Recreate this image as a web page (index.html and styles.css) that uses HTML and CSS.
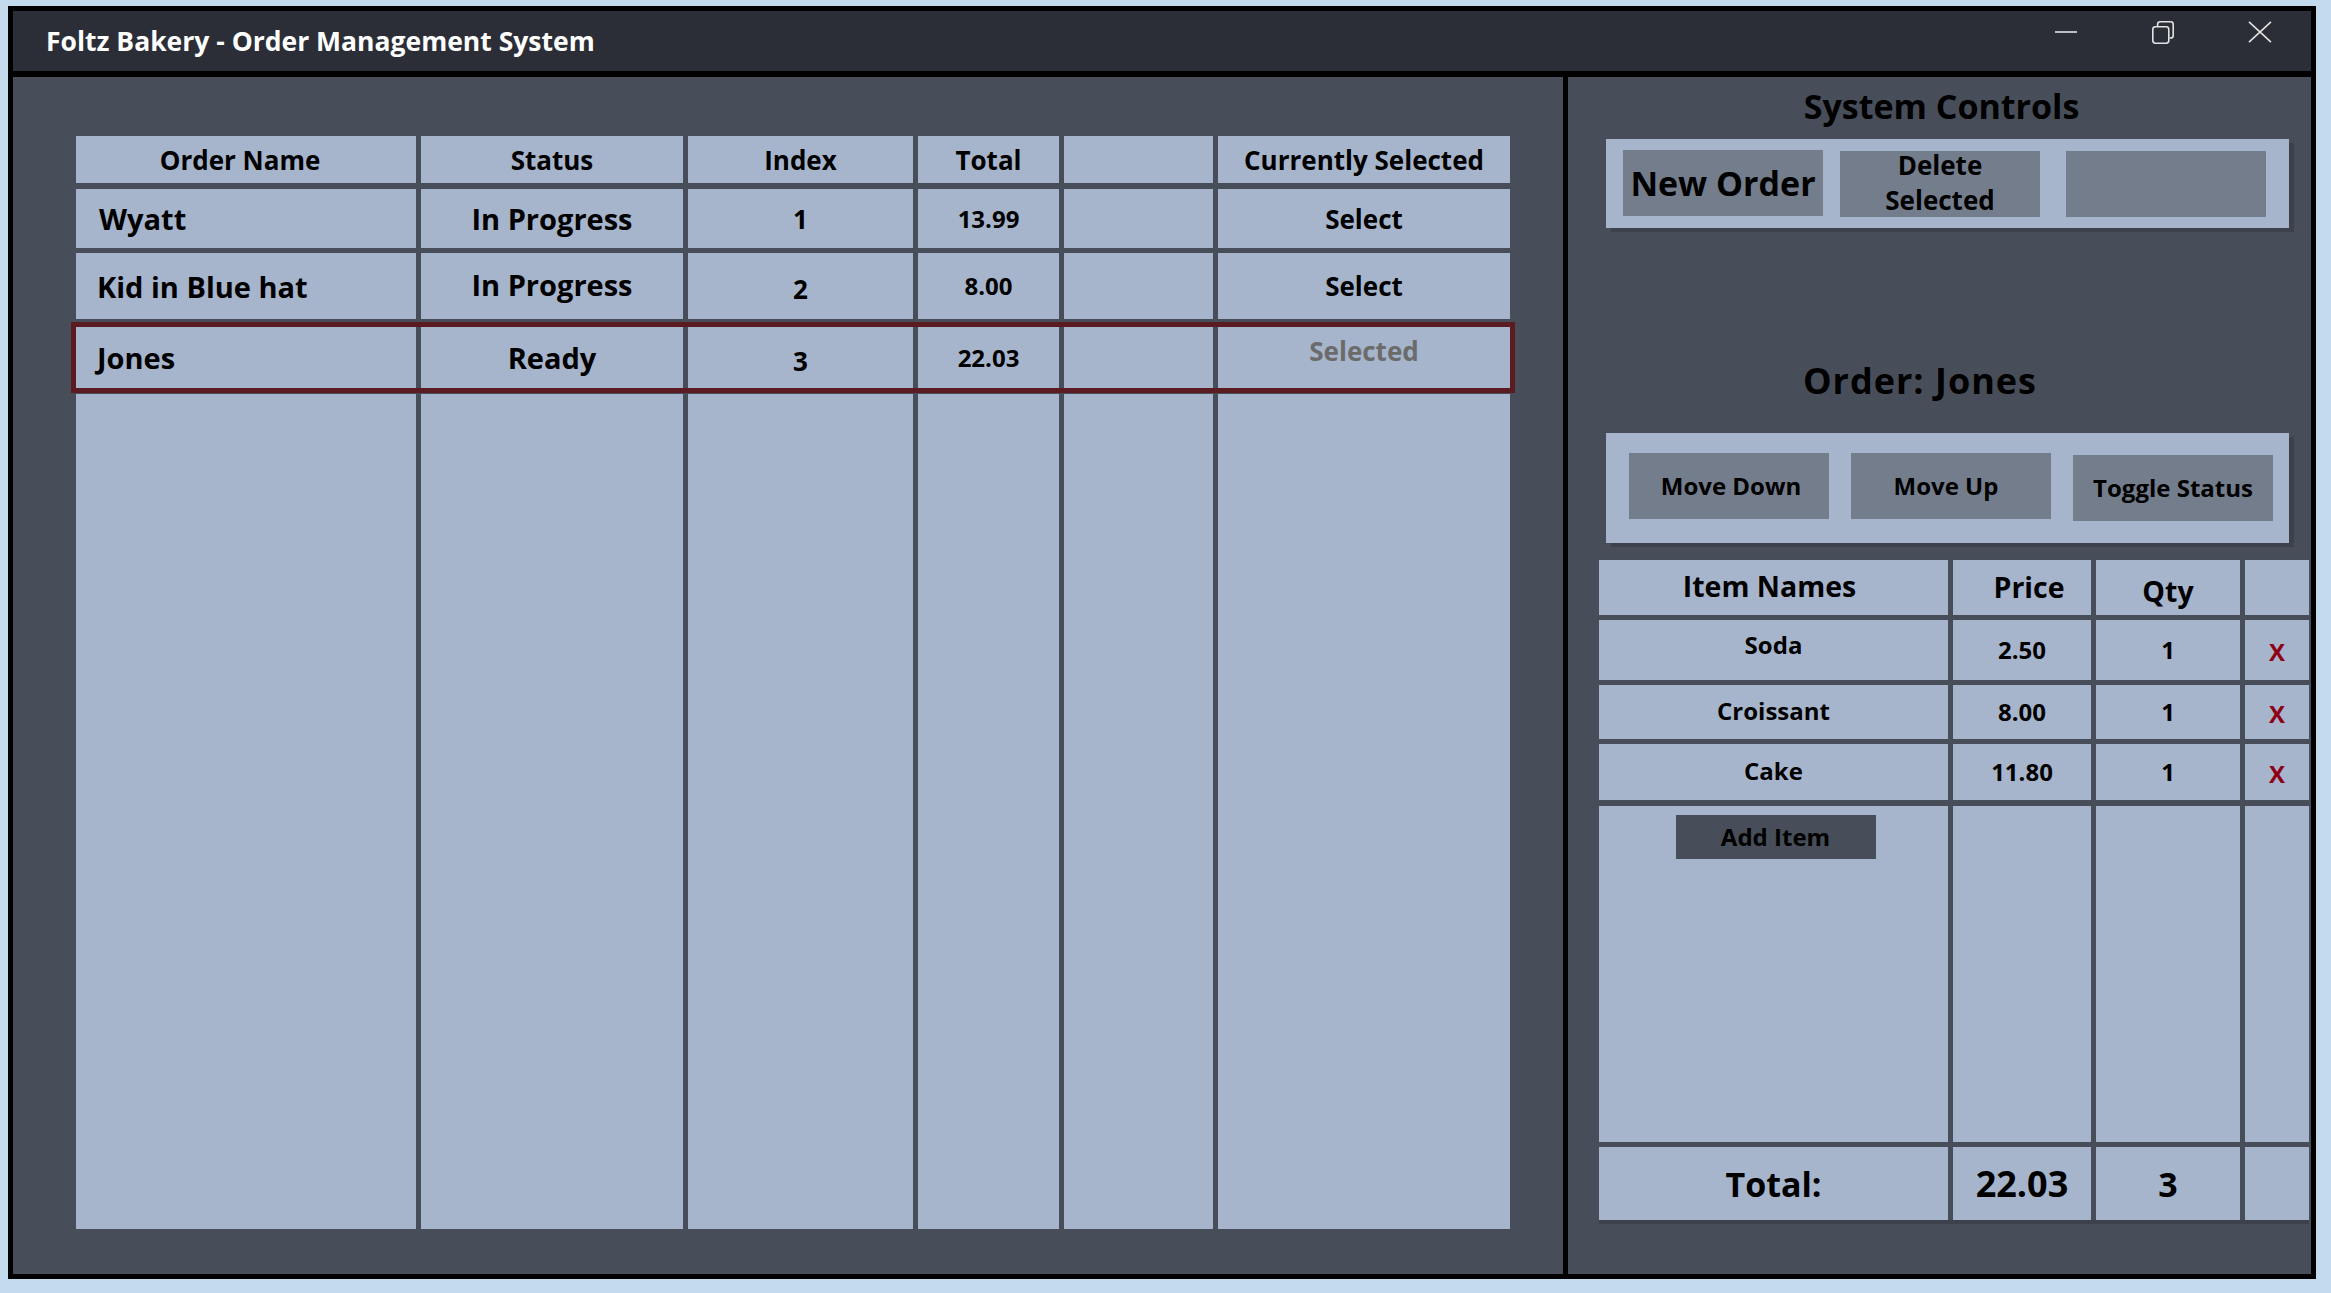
FILE: index.html
```html
<!DOCTYPE html>
<html lang="en">
<head>
<meta charset="utf-8">
<title>Foltz Bakery - Order Management System</title>
<link rel="stylesheet" href="styles.css">
</head>
<body>
<div class="window">
  <header class="titlebar">
    <div class="title">Foltz Bakery - Order Management System</div>
    <div class="caption-buttons">
      <div class="cap-btn">
        <svg width="22" height="22" viewBox="0 0 22 22"><line x1="0" y1="11" x2="22" y2="11" class="cap-stroke"/></svg>
      </div>
      <div class="cap-btn">
        <svg width="22" height="23" viewBox="0 0 22 23" fill="none">
          <rect x="0.8" y="5.8" width="16" height="16.4" rx="2.6" class="cap-stroke"/>
          <path d="M5.6 5.2 V3.4 Q5.6 0.8 8.2 0.8 H18.6 Q21.2 0.8 21.2 3.4 V14.4 Q21.2 17 18.6 17 H17.4" class="cap-stroke"/>
        </svg>
      </div>
      <div class="cap-btn">
        <svg width="26" height="22" viewBox="0 0 26 22"><path d="M2 0.8 L24 21.2 M24 0.8 L2 21.2" class="cap-stroke"/></svg>
      </div>
    </div>
  </header>

  <main class="content">
    <section class="orders-panel">
      <div class="orders-table">
        <div class="orow ohead">
          <div class="cell head-name">Order Name</div>
          <div class="cell">Status</div>
          <div class="cell">Index</div>
          <div class="cell">Total</div>
          <div class="cell"></div>
          <div class="cell">Currently Selected</div>
        </div>
        <div class="orow r1">
          <div class="cell name first">Wyatt</div>
          <div class="cell big">In Progress</div>
          <div class="cell">1</div>
          <div class="cell small">13.99</div>
          <div class="cell"></div>
          <div class="cell">Select</div>
        </div>
        <div class="orow r2">
          <div class="cell name">Kid in Blue hat</div>
          <div class="cell big up">In Progress</div>
          <div class="cell down">2</div>
          <div class="cell small">8.00</div>
          <div class="cell"></div>
          <div class="cell">Select</div>
        </div>
        <div class="orow r3">
          <div class="cell name">Jones</div>
          <div class="cell big">Ready</div>
          <div class="cell down">3</div>
          <div class="cell small">22.03</div>
          <div class="cell"></div>
          <div class="cell selected">Selected</div>
        </div>
        <div class="orow ofill">
          <div class="cell"></div>
          <div class="cell"></div>
          <div class="cell"></div>
          <div class="cell"></div>
          <div class="cell"></div>
          <div class="cell"></div>
        </div>
      </div>
    </section>

    <aside class="side-panel">
      <h2 class="side-title">System Controls</h2>
      <div class="ctrl-box sys-box">
        <div class="btn btn-new">New Order</div>
        <div class="btn btn-delete">Delete<br>Selected</div>
        <div class="btn btn-blank"></div>
      </div>

      <h2 class="order-title">Order: Jones</h2>
      <div class="ctrl-box order-box">
        <div class="btn btn-sm">Move Down</div>
        <div class="btn btn-sm btn-up">Move Up</div>
        <div class="btn btn-sm btn-toggle">Toggle Status</div>
      </div>

      <div class="items-table">
        <div class="irow ihead">
          <div class="cell iname">Item Names</div>
          <div class="cell price-h">Price</div>
          <div class="cell qty-h">Qty</div>
          <div class="cell"></div>
        </div>
        <div class="irow ir1">
          <div class="cell iname lift">Soda</div>
          <div class="cell">2.50</div>
          <div class="cell">1</div>
          <div class="cell remove">X</div>
        </div>
        <div class="irow ir2">
          <div class="cell iname">Croissant</div>
          <div class="cell">8.00</div>
          <div class="cell">1</div>
          <div class="cell remove">X</div>
        </div>
        <div class="irow ir3">
          <div class="cell iname">Cake</div>
          <div class="cell">11.80</div>
          <div class="cell">1</div>
          <div class="cell remove">X</div>
        </div>
        <div class="irow ifill">
          <div class="cell add-cell"><div class="add-btn">Add Item</div></div>
          <div class="cell"></div>
          <div class="cell"></div>
          <div class="cell"></div>
        </div>
        <div class="irow itotal">
          <div class="cell">Total:</div>
          <div class="cell total-num">22.03</div>
          <div class="cell">3</div>
          <div class="cell"></div>
        </div>
      </div>
    </aside>
  </main>
</div>
</body>
</html>
```

FILE: styles.css
```css
* {
  box-sizing: border-box;
}

html,
body {
  margin: 0;
}

body {
  width: 2331px;
  height: 1293px;
  overflow: hidden;
  padding: 6px 0 0 8px;
  background: #c3d9ec;
  font-family: "Open Sans", "Noto Sans", "DejaVu Sans", sans-serif;
  font-weight: 700;
  color: #000;
}

.window {
  width: 2308px;
  height: 1273px;
  border: 5px solid #000;
  display: flex;
  flex-direction: column;
  background: #474e59;
}

/* ---------- title bar ---------- */
.titlebar {
  height: 66px;
  flex: none;
  background: #2b2e36;
  border-bottom: 6px solid #000;
  display: flex;
  justify-content: space-between;
  align-items: flex-start;
}

.title {
  padding: 17px 0 0 33px;
  font-size: 26.5px;
  line-height: 27px;
  color: #fff;
}

.caption-buttons {
  display: flex;
  margin-right: 3px;
}

.cap-btn {
  width: 97px;
  height: 42px;
  display: flex;
  align-items: center;
  justify-content: center;
}

.cap-stroke {
  stroke: #e2e2e2;
  stroke-width: 1.6;
  fill: none;
}

/* ---------- content ---------- */
.content {
  flex: 1;
  display: flex;
  min-height: 0;
}

.cell {
  background: #a6b5cb;
  display: flex;
  align-items: center;
  justify-content: center;
  text-align: center;
  font-size: 25px;
  line-height: 1;
  white-space: nowrap;
}

/* ---------- left: orders ---------- */
.orders-panel {
  width: 1555px;
  flex: none;
  background: #474e59;
  border-right: 5px solid #000;
  padding: 59px 53px 45px 63px;
  display: flex;
}

.orders-table {
  flex: 1;
  display: flex;
  flex-direction: column;
}

.orow {
  display: grid;
  grid-template-columns: 340px 262px 225px 141px 149px 292px;
  column-gap: 5px;
}

.ohead {
  height: 47px;
  margin-bottom: 6px;
}

.r1 {
  height: 59px;
  margin-bottom: 5px;
}

.r2 {
  height: 66px;
  margin-bottom: 8px;
}

.r3 {
  height: 61px;
  margin-bottom: 6px;
  outline: 5px solid #5a1c20;
}

.ofill {
  flex: 1;
}

.orow .cell {
  font-size: 26px;
}

.ohead .cell {
  font-size: 26px;
}

.ohead .cell.head-name {
  padding-right: 12px;
}

.orow .cell.name {
  justify-content: flex-start;
  padding-left: 21px;
  font-size: 29px;
}

.orow .cell.name.first {
  padding-left: 23px;
}

.orow .cell.big {
  font-size: 29px;
}

.orow .cell.small {
  font-size: 24px;
}

.orow .cell.up {
  padding-bottom: 4px;
}

.orow .cell.down {
  padding-top: 6px;
}

.orow .cell.selected {
  color: #6b6b6b;
  padding-bottom: 14px;
}

/* ---------- right: side panel ---------- */
.side-panel {
  flex: 1;
  background: #474e59;
  padding-top: 12px;
  display: flex;
  flex-direction: column;
}

.side-title {
  margin: 0;
  font-size: 34px;
  line-height: 34px;
  text-align: center;
  padding-left: 4px;
}

.ctrl-box {
  width: 683px;
  margin-left: 38px;
  background: #a6b5cb;
  box-shadow: 5px 4px 0 #3c414b;
  display: flex;
  align-items: flex-start;
}

.sys-box {
  margin-top: 16px;
  height: 89px;
  padding: 11px 0 0 17px;
}

.btn {
  width: 200px;
  height: 66px;
  flex: none;
  background: #737d8c;
  display: flex;
  align-items: center;
  justify-content: center;
  text-align: center;
  line-height: 1;
}

.btn-new {
  font-size: 34px;
}

.btn-delete {
  margin-left: 17px;
  margin-top: 1px;
  font-size: 26px;
  line-height: 35px;
  padding-bottom: 2px;
}

.btn-blank {
  margin-left: 26px;
  margin-top: 1px;
}

.order-title {
  margin: 135px 0 0 0;
  padding-right: 39px;
  font-size: 36px;
  line-height: 36px;
  letter-spacing: 1px;
  text-align: center;
}

.order-box {
  margin-top: 34px;
  height: 110px;
  padding: 20px 0 0 23px;
}

.btn-sm {
  font-size: 24px;
}

.btn-sm + .btn-sm {
  margin-left: 22px;
}

.btn-sm.btn-up {
  padding-right: 10px;
}

.btn-toggle {
  margin-top: 2px;
  margin-left: 23px;
}

.btn-sm:first-child {
  padding-left: 4px;
}

/* ---------- items table ---------- */
.items-table {
  width: 710px;
  height: 660px;
  margin: 17px 0 0 31px;
  display: flex;
  flex-direction: column;
}

.irow {
  display: grid;
  grid-template-columns: 349px 138px 144px 64px;
  column-gap: 5px;
}

.irow .cell {
  font-size: 24px;
}

.ihead {
  height: 55px;
  margin-bottom: 5px;
}

.ihead .cell {
  font-size: 28.5px;
}

.ihead .cell.iname {
  padding-right: 8px;
}

.ihead .price-h {
  padding-left: 14px;
}

.ihead .qty-h {
  padding-top: 8px;
}

.ir1 {
  height: 60px;
  margin-bottom: 5px;
}

.ir2 {
  height: 54px;
  margin-bottom: 5px;
}

.ir3 {
  height: 56px;
  margin-bottom: 6px;
}

.irow .cell.iname {
  padding-bottom: 3px;
}

.irow .cell.iname.lift {
  padding-bottom: 11px;
}

.irow .cell.remove {
  color: #8f0016;
  padding-top: 4px;
}

.ifill {
  flex: 1;
  margin-bottom: 5px;
}

.irow .add-cell {
  align-items: flex-start;
  padding: 9px 0 0 4px;
}

.add-btn {
  width: 200px;
  height: 44px;
  background: #474e59;
  display: flex;
  align-items: center;
  justify-content: center;
  font-size: 24px;
}

.itotal {
  height: 73px;
  box-shadow: 0 4px 0 #3c414b;
}

.itotal .cell {
  font-size: 34px;
}

.itotal .cell.total-num {
  font-size: 36px;
}
```
